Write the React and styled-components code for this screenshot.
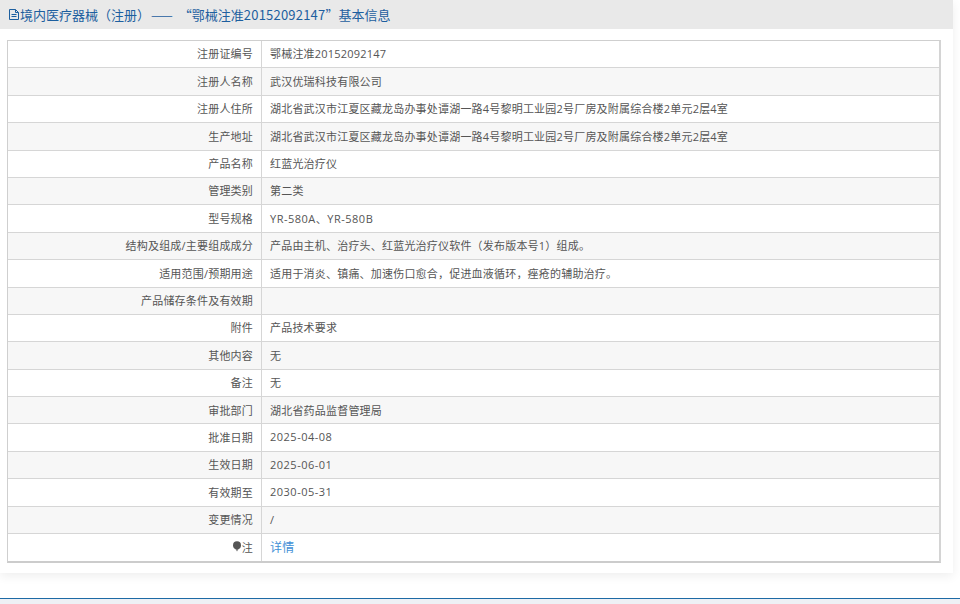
import React from "react";
import styled, { createGlobalStyle } from "styled-components";

const GlobalStyle = createGlobalStyle`
  html, body {
    margin: 0;
    padding: 0;
    background: #fff;
    overflow: hidden;
    font-family: "Open Sans", "Noto Sans CJK SC", sans-serif;
  }
`;

const Page = styled.div`
  width: 960px;
  height: 604px;
  display: flex;
  flex-direction: column;
`;

const Card = styled.div`
  width: 953px;
  height: 573px;
  flex: none;
  box-shadow: 0 3px 10px rgba(0, 0, 0, 0.07);
`;

const Header = styled.div`
  height: 29px;
  background: #e9e9e9;
  display: flex;
  align-items: center;
  padding-left: 8px;
  color: #1d5f9f;
  font-family: "Noto Sans CJK SC", sans-serif;
  font-size: 13px;
`;

const Dash = styled.span`
  margin: 0 5px 0 1px;
  letter-spacing: 1px;
`;

const Serial = styled.span`
  letter-spacing: 0.2px;
`;

const Body = styled.div`
  padding: 11px 12px 11px 7px;
`;

const Table = styled.div`
  border: 1px solid #cfcfcf;
  border-bottom: 2px solid #cccccc;
  border-right: 2px solid #d4d4d4;
`;

const Row = styled.div`
  display: grid;
  grid-template-columns: 254px 1fr;
  height: 27.4px;
  box-sizing: border-box;
  background: ${(p) => (p.$alt ? "#f7f7f7" : "#fff")};
  border-bottom: ${(p) => (p.$last ? "none" : "1px solid #d6d6d6")};
  font-size: 11px;
  letter-spacing: 0.2px;
  color: #555;
`;

const Label = styled.div`
  display: flex;
  align-items: center;
  justify-content: flex-end;
  padding: 0 8px 1.5px 0;
  border-right: 1px solid #d6d6d6;
`;

const Value = styled.div`
  display: flex;
  align-items: center;
  padding: 0 0 1.5px 8px;
  letter-spacing: ${(p) => (p.$latin ? "0.5px" : "0.2px")};
`;

const DetailLink = styled.a`
  color: #3f8fd6;
  font-size: 12px;
  text-decoration: none;
`;

const Footer = styled.div`
  margin-top: 25px;
  flex: 1;
  border-top: 1px solid #1d6aa5;
  background: #eef0f5;
`;

const FileIcon = () => (
  <svg width="12" height="13" viewBox="0 0 12 13" fill="none" stroke="#1d5f9f" strokeWidth="1">
    <path d="M1.5 1.5h6l3 3v7h-9z" />
    <path d="M7.5 1.5v3h3M3.5 6.5h5M3.5 8.5h5" />
  </svg>
);

const BulbIcon = () => (
  <svg width="10" height="11" viewBox="0 0 10 11">
    <circle cx="5" cy="4.2" r="4" fill="#555" />
    <path d="M3.4 8h3.2L5 10.6z" fill="#777" />
  </svg>
);

const rows = [
  ["注册证编号", "鄂械注准20152092147"],
  ["注册人名称", "武汉优瑞科技有限公司"],
  ["注册人住所", "湖北省武汉市江夏区藏龙岛办事处谭湖一路4号黎明工业园2号厂房及附属综合楼2单元2层4室"],
  ["生产地址", "湖北省武汉市江夏区藏龙岛办事处谭湖一路4号黎明工业园2号厂房及附属综合楼2单元2层4室"],
  ["产品名称", "红蓝光治疗仪"],
  ["管理类别", "第二类"],
  ["型号规格", "YR-580A、YR-580B"],
  ["结构及组成/主要组成成分", "产品由主机、治疗头、红蓝光治疗仪软件（发布版本号1）组成。"],
  ["适用范围/预期用途", "适用于消炎、镇痛、加速伤口愈合，促进血液循环，痤疮的辅助治疗。"],
  ["产品储存条件及有效期", ""],
  ["附件", "产品技术要求"],
  ["其他内容", "无"],
  ["备注", "无"],
  ["审批部门", "湖北省药品监督管理局"],
  ["批准日期", "2025-04-08"],
  ["生效日期", "2025-06-01"],
  ["有效期至", "2030-05-31"],
  ["变更情况", "/"],
];

const isLatin = (text) => /^[A-Z0-9\-、]+$/.test(text);

export default function App() {
  return (
    <Page>
      <GlobalStyle />
      <Card>
        <Header>
          <FileIcon />
          境内医疗器械（注册）<Dash>——</Dash>“鄂械注准<Serial>20152092147</Serial>”基本信息
        </Header>
        <Body>
          <Table>
            {rows.map(([label, value], i) => (
              <Row key={label} $alt={i % 2 === 1}>
                <Label>{label}</Label>
                <Value $latin={isLatin(value)}>{value}</Value>
              </Row>
            ))}
            <Row $last>
              <Label>
                <BulbIcon />注
              </Label>
              <Value>
                <DetailLink href="#">详情</DetailLink>
              </Value>
            </Row>
          </Table>
        </Body>
      </Card>
      <Footer />
    </Page>
  );
}
